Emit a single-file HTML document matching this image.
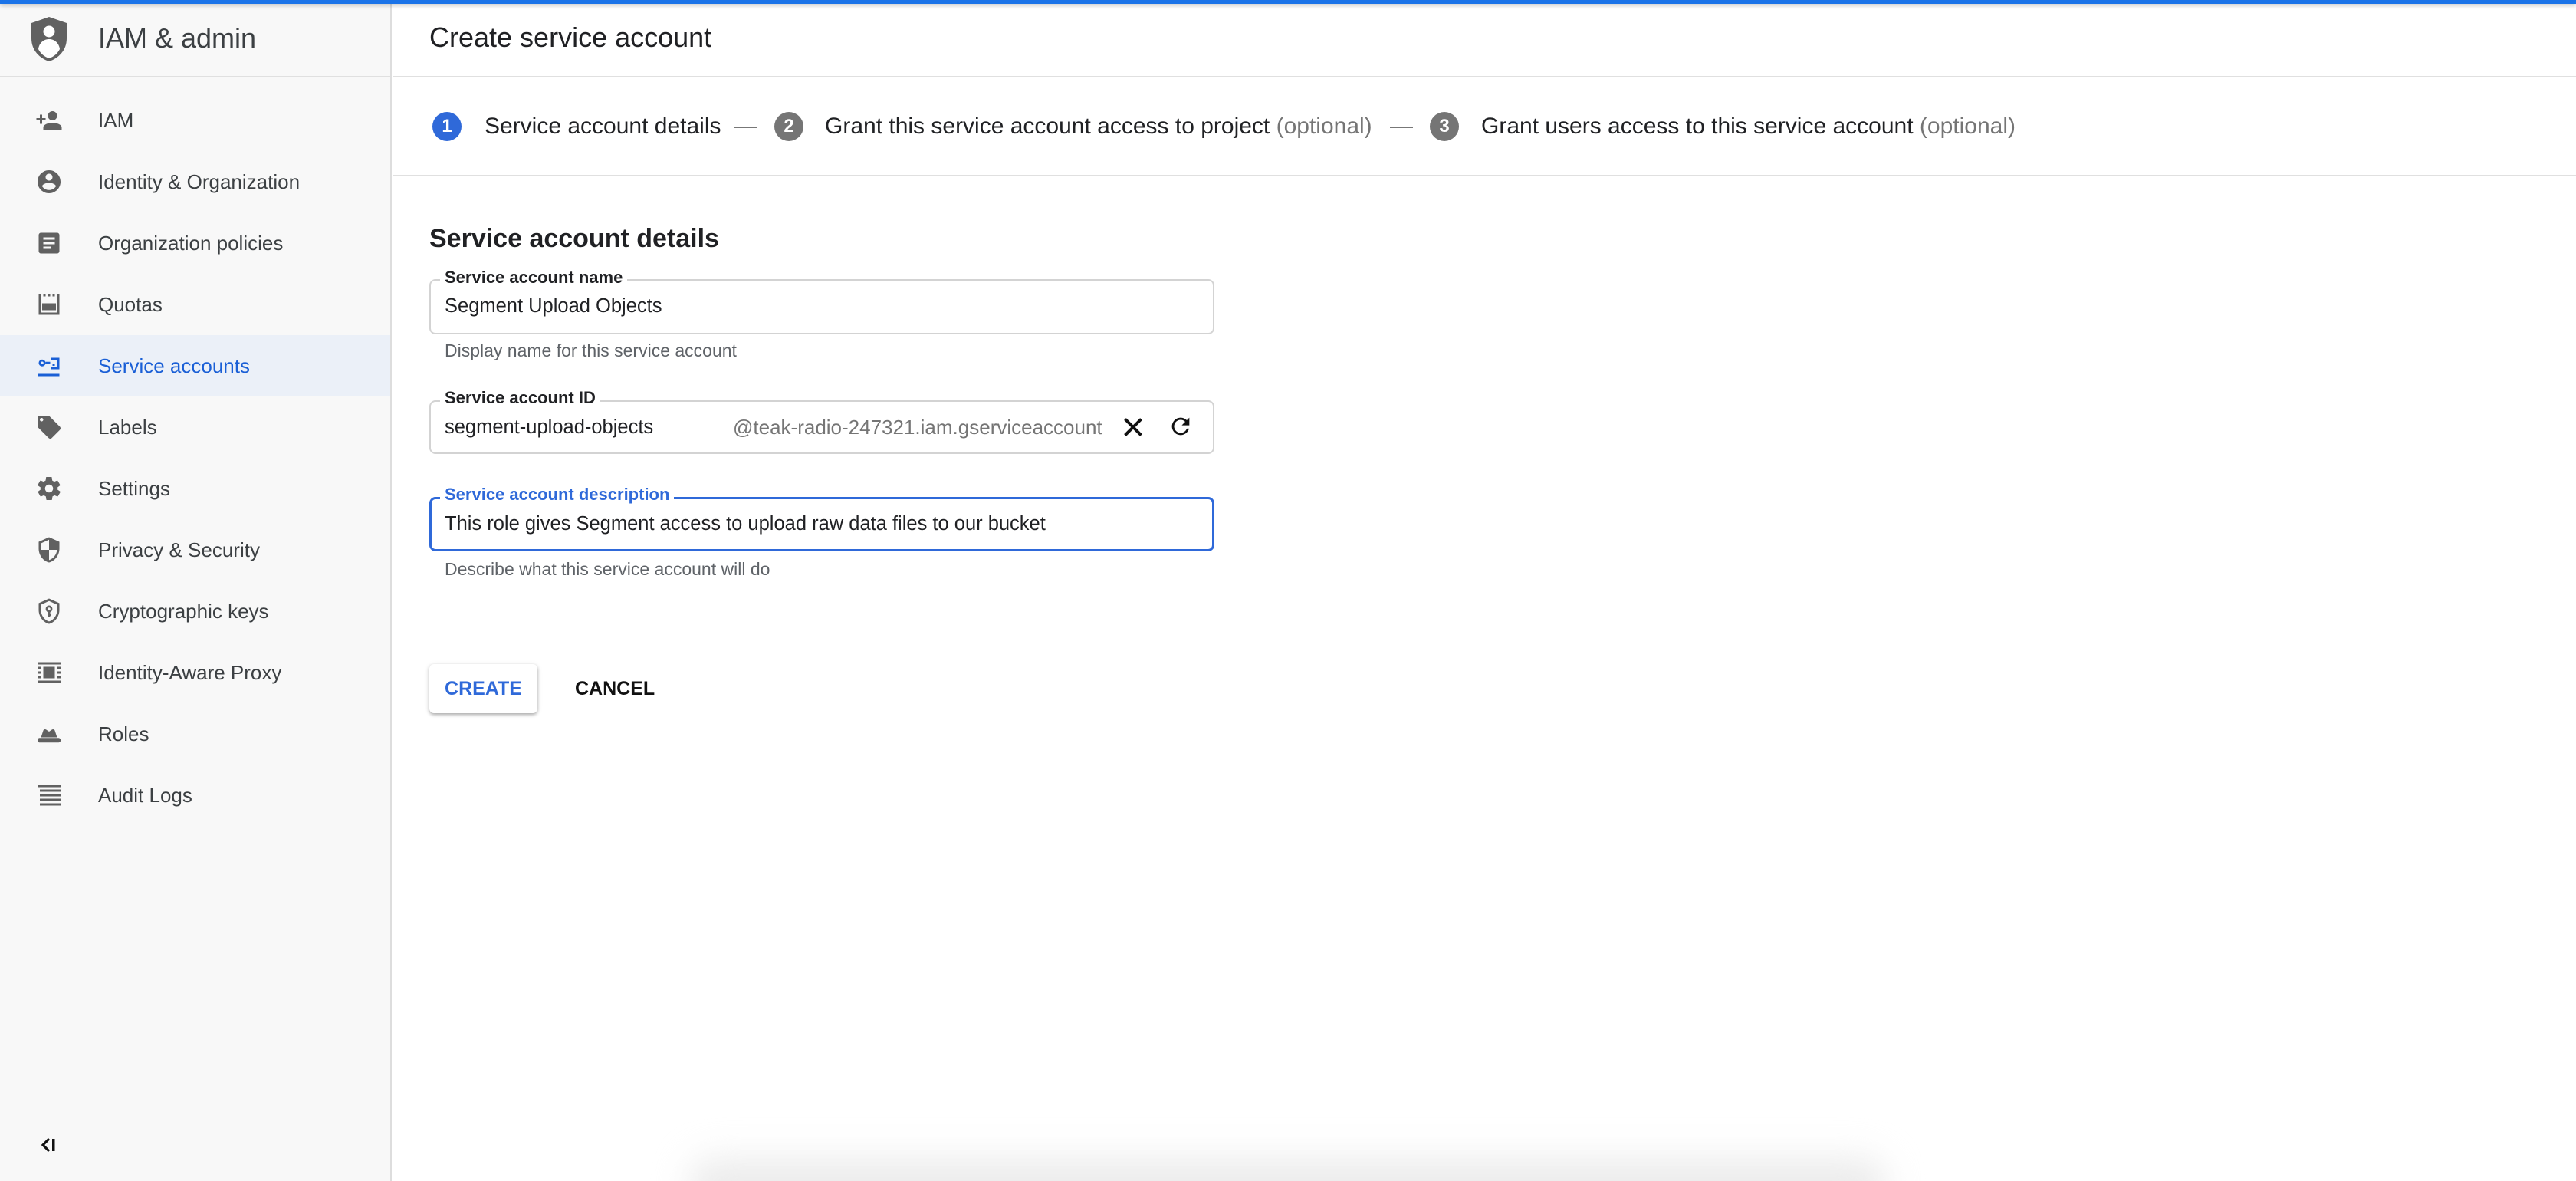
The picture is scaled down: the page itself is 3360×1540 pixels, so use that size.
<!DOCTYPE html>
<html style="overflow:hidden;width:3360px;height:1540px"><head><meta charset="utf-8"><style>
*{margin:0;padding:0;box-sizing:border-box}
body{width:3360px;height:1540px;overflow:hidden;background:#fff;font-family:"Liberation Sans",Arial,sans-serif;position:relative}
.a{position:absolute;white-space:nowrap}
#topbar{left:0;top:0;width:3360px;height:5px;background:#1a73e8;box-shadow:0 2px 6px rgba(0,0,0,.25);z-index:5}
#side{left:0;top:0;width:511px;height:1540px;background:#f8f8f8;border-right:2px solid #ddd}
.nav{position:absolute;left:0;width:509px;height:80px}
.nav .t{position:absolute;left:128px;top:0;line-height:80px;font-size:26px;color:#3c4043}
.nav svg{position:absolute;left:46px;top:22px;width:36px;height:36px;fill:#616161}
.sel{background:#ebf0f8}
.sel .t{color:#1a5fd6}
.sel svg{fill:#1a5fd6}
.lbl{font-size:22px;font-weight:bold;color:#202124;background:#fff;padding:0 6px;line-height:26px}
.box{border:2px solid #d3d3d3;border-radius:8px}
.val{font-size:25.5px;color:#202124;line-height:30px}
.help{font-size:23px;color:#5f6368;line-height:28px}
.circ{width:38px;height:38px;border-radius:50%;color:#fff;font-size:24px;font-weight:bold;text-align:center;line-height:38px}
.st{font-size:30px;color:#202124;line-height:40px}
.op{color:#757575}
.dash{height:2px;width:30px;background:#777}
</style></head><body>
<div class="a" id="topbar"></div>
<div class="a" id="side">
  <div class="a" style="left:0;top:99px;width:509px;height:2px;background:#e0e0e0"></div>
  <svg class="a" style="left:38px;top:20px" width="52" height="62" viewBox="0 0 52 62"><path d="M26 2 L49 10 V30 C49 46 38 56 26 60 C14 56 3 46 3 30 V10 Z" fill="#616161"/><circle cx="26" cy="21" r="7.5" fill="#fff"/><path d="M12 44 C13 36 19 31 26 31 C33 31 39 36 40 44 C37 50 32 54 26 56 C20 54 15 50 12 44Z" fill="#fff"/></svg>
  <div class="a" style="left:128px;top:28px;font-size:36px;color:#3c4043;line-height:44px">IAM &amp; admin</div>

  <div class="nav" style="top:117px"><svg viewBox="0 0 24 24"><path d="M15 12c2.2 0 4-1.8 4-4s-1.8-4-4-4-4 1.8-4 4 1.8 4 4 4zm-9-2V7H4v3H1v2h3v3h2v-3h3v-2H6zm9 4c-2.7 0-8 1.3-8 4v2h16v-2c0-2.7-5.3-4-8-4z"/></svg><div class="t">IAM</div></div>
  <div class="nav" style="top:197px"><svg viewBox="0 0 24 24"><path d="M12 2C6.5 2 2 6.5 2 12s4.5 10 10 10 10-4.5 10-10S17.5 2 12 2zm0 3c1.7 0 3 1.3 3 3s-1.3 3-3 3-3-1.3-3-3 1.3-3 3-3zm0 14.2c-2.5 0-4.7-1.3-6-3.2 0-2 4-3.1 6-3.1s6 1.1 6 3.1c-1.3 1.9-3.5 3.2-6 3.2z"/></svg><div class="t">Identity &amp; Organization</div></div>
  <div class="nav" style="top:277px"><svg viewBox="0 0 24 24"><path d="M19 3H5c-1.1 0-2 .9-2 2v14c0 1.1.9 2 2 2h14c1.1 0 2-.9 2-2V5c0-1.1-.9-2-2-2zm-5 14H7v-2h7v2zm3-4H7v-2h10v2zm0-4H7V7h10v2z"/></svg><div class="t">Organization policies</div></div>
  <div class="nav" style="top:357px"><svg viewBox="0 0 24 24"><path d="M3 3h2v2H3zM7 3h2v2H7zM11 3h2v2h-2zM15 3h2v2h-2zM19 3h2v18H3V3h2v16h14zM6 11h12v6H6z"/></svg><div class="t">Quotas</div></div>
  <div class="nav sel" style="top:437px"><svg viewBox="0 0 24 24"><path d="M6 6.5a3 3 0 1 0 0 6 3 3 0 0 0 0-6zm0 1.8a1.2 1.2 0 1 1 0 2.4 1.2 1.2 0 0 1 0-2.4zM9 8.5h4v2H9zM14 5h7v10h-7v-2h5V7h-5zM15 10h2v2h-2zM2 19h19v2H2z"/></svg><div class="t">Service accounts</div></div>
  <div class="nav" style="top:517px"><svg viewBox="0 0 24 24"><path d="M21.4 11.6l-9-9C12.1 2.2 11.6 2 11 2H4c-1.1 0-2 .9-2 2v7c0 .6.2 1.1.6 1.4l9 9c.4.4.9.6 1.4.6s1.1-.2 1.4-.6l7-7c.4-.4.6-.9.6-1.4s-.2-1.1-.6-1.4zM5.5 7C4.7 7 4 6.3 4 5.5S4.7 4 5.5 4 7 4.7 7 5.5 6.3 7 5.5 7z"/></svg><div class="t">Labels</div></div>
  <div class="nav" style="top:597px"><svg viewBox="0 0 24 24"><path d="M19.4 13c0-.3.1-.6.1-1s0-.7-.1-1l2.1-1.6c.2-.2.2-.4.1-.6l-2-3.5c-.1-.2-.4-.3-.6-.2l-2.5 1c-.5-.4-1.1-.7-1.7-1l-.4-2.7c0-.2-.2-.4-.5-.4h-4c-.3 0-.5.2-.5.4l-.4 2.7c-.6.3-1.2.6-1.7 1l-2.5-1c-.2-.1-.5 0-.6.2l-2 3.5c-.1.2-.1.5.1.6L4.6 11c0 .3-.1.6-.1 1s0 .7.1 1l-2.1 1.6c-.2.2-.2.4-.1.6l2 3.5c.1.2.4.3.6.2l2.5-1c.5.4 1.1.7 1.7 1l.4 2.7c0 .2.2.4.5.4h4c.3 0 .5-.2.5-.4l.4-2.7c.6-.3 1.2-.6 1.7-1l2.5 1c.2.1.5 0 .6-.2l2-3.5c.1-.2.1-.5-.1-.6L19.4 13zM12 15.5c-1.9 0-3.5-1.6-3.5-3.5s1.6-3.5 3.5-3.5 3.5 1.6 3.5 3.5-1.6 3.5-3.5 3.5z"/></svg><div class="t">Settings</div></div>
  <div class="nav" style="top:677px"><svg viewBox="0 0 24 24"><path d="M12 1L3 5v6c0 5.5 3.8 10.7 9 12 5.2-1.3 9-6.5 9-12V5l-9-4zm0 11h7c-.5 4.1-3.3 7.8-7 8.9V12H5V6.3l7-3.1V12z"/></svg><div class="t">Privacy &amp; Security</div></div>
  <div class="nav" style="top:757px"><svg viewBox="0 0 24 24"><path d="M12 1L3 5v6c0 5.5 3.8 10.7 9 12 5.2-1.3 9-6.5 9-12V5l-9-4zm0 2.2l7 3.1V11c0 4.5-3 8.7-7 9.9-4-1.2-7-5.4-7-9.9V6.3l7-3.1zM12 7a3 3 0 0 0-1 5.8V17h2v-1h1v-2h-1v-1.2A3 3 0 0 0 12 7zm0 1.8a1.2 1.2 0 1 1 0 2.4 1.2 1.2 0 0 1 0-2.4z"/></svg><div class="t">Cryptographic keys</div></div>
  <div class="nav" style="top:837px"><svg viewBox="0 0 24 24"><path d="M2 3h20v2H2zM2 19h20v2H2zM2 7h3v2H2zM19 7h3v2h-3zM2 11h3v2H2zM19 11h3v2h-3zM2 15h3v2H2zM19 15h3v2h-3zM7 7h10v10H7z"/></svg><div class="t">Identity-Aware Proxy</div></div>
  <div class="nav" style="top:917px"><svg viewBox="0 0 24 24"><path d="M5 15l2-6c.3-.9 1.5-1.3 2.3-.8L12 10l2.7-1.8c.8-.5 2-.1 2.3.8l2 6zM2 17c0-1 1-1.5 2-1.5h16c1 0 2 .5 2 1.5v1c0 1-1 1.5-2 1.5H4C3 19.5 2 19 2 18z"/></svg><div class="t">Roles</div></div>
  <div class="nav" style="top:997px"><svg viewBox="0 0 24 24"><path d="M2 3h20v2H2zM4 7h18v2H4zM4 11h18v2H4zM4 15h18v2H4zM4 19h18v2H4z"/></svg><div class="t">Audit Logs</div></div>

  <svg class="a" style="left:52px;top:1482px" width="24" height="22" viewBox="0 0 24 22"><path d="M12 3 L4 11 L12 19" stroke="#111" stroke-width="3.2" fill="none"/><rect x="16" y="3" width="3.5" height="16" fill="#111"/></svg>
</div>

<div class="a" style="left:560px;top:27px;font-size:36px;color:#202124;line-height:44px">Create service account</div>
<div class="a" style="left:512px;top:99px;width:2848px;height:2px;background:#e0e0e0"></div>

<div class="a circ" style="left:564px;top:146px;background:#2f69d9">1</div>
<div class="a st" style="left:632px;top:145px">Service account details</div>
<div class="a dash" style="left:958px;top:165px"></div>
<div class="a circ" style="left:1010px;top:146px;background:#757575">2</div>
<div class="a st" style="left:1076px;top:145px">Grant this service account access to project <span class="op">(optional)</span></div>
<div class="a dash" style="left:1813px;top:165px"></div>
<div class="a circ" style="left:1865px;top:146px;background:#757575">3</div>
<div class="a st" style="left:1932px;top:145px">Grant users access to this service account <span class="op">(optional)</span></div>
<div class="a" style="left:512px;top:228px;width:2848px;height:2px;background:#e0e0e0"></div>

<div class="a" style="left:560px;top:290px;font-size:34px;font-weight:bold;color:#202124;line-height:42px">Service account details</div>

<div class="a box" style="left:560px;top:364px;width:1024px;height:72px"></div>
<div class="a lbl" style="left:574px;top:349px">Service account name</div>
<div class="a val" style="left:580px;top:384px">Segment Upload Objects</div>
<div class="a help" style="left:580px;top:443px">Display name for this service account</div>

<div class="a box" style="left:560px;top:522px;width:1024px;height:70px"></div>
<div class="a lbl" style="left:574px;top:506px">Service account ID</div>
<div class="a val" style="left:580px;top:542px">segment-upload-objects</div>
<div class="a val" style="left:956px;top:542px;color:#757575;font-size:26px">@teak-radio-247321.iam.gserviceaccount</div>
<svg class="a" style="left:1460px;top:539px" width="36" height="36" viewBox="0 0 24 24"><path d="M5 5L19 19M19 5L5 19" stroke="#111" stroke-width="2.6" fill="none"/></svg>
<svg class="a" style="left:1523px;top:539px" width="34" height="34" viewBox="0 0 24 24"><path d="M17.65 6.35A7.96 7.96 0 0 0 12 4a8 8 0 1 0 7.73 10h-2.08A6 6 0 1 1 12 6c1.66 0 3.14.69 4.22 1.78L13 11h7V4l-2.35 2.35z" fill="#111"/></svg>

<div class="a" style="left:560px;top:648px;width:1024px;height:71px;border:3px solid #2f69d9;border-radius:8px"></div>
<div class="a lbl" style="left:574px;top:632px;color:#2f69d9">Service account description</div>
<div class="a val" style="left:580px;top:668px">This role gives Segment access to upload raw data files to our bucket</div>
<div class="a help" style="left:580px;top:728px">Describe what this service account will do</div>

<div class="a" style="left:560px;top:866px;width:141px;height:64px;background:#fff;border-radius:6px;box-shadow:0 2px 4px rgba(0,0,0,.3),0 1px 8px rgba(0,0,0,.08);color:#2f69d9;font-weight:bold;font-size:25px;text-align:center;line-height:64px">CREATE</div>
<div class="a" style="left:750px;top:866px;font-weight:bold;font-size:25px;line-height:64px;color:#111">CANCEL</div>

<div class="a" style="left:820px;top:1440px;width:1720px;height:100px;overflow:hidden">
  <div style="position:absolute;left:80px;top:70px;width:1560px;height:80px;border-radius:30px;background:#ececec;filter:blur(22px)"></div>
</div>
</body></html>
